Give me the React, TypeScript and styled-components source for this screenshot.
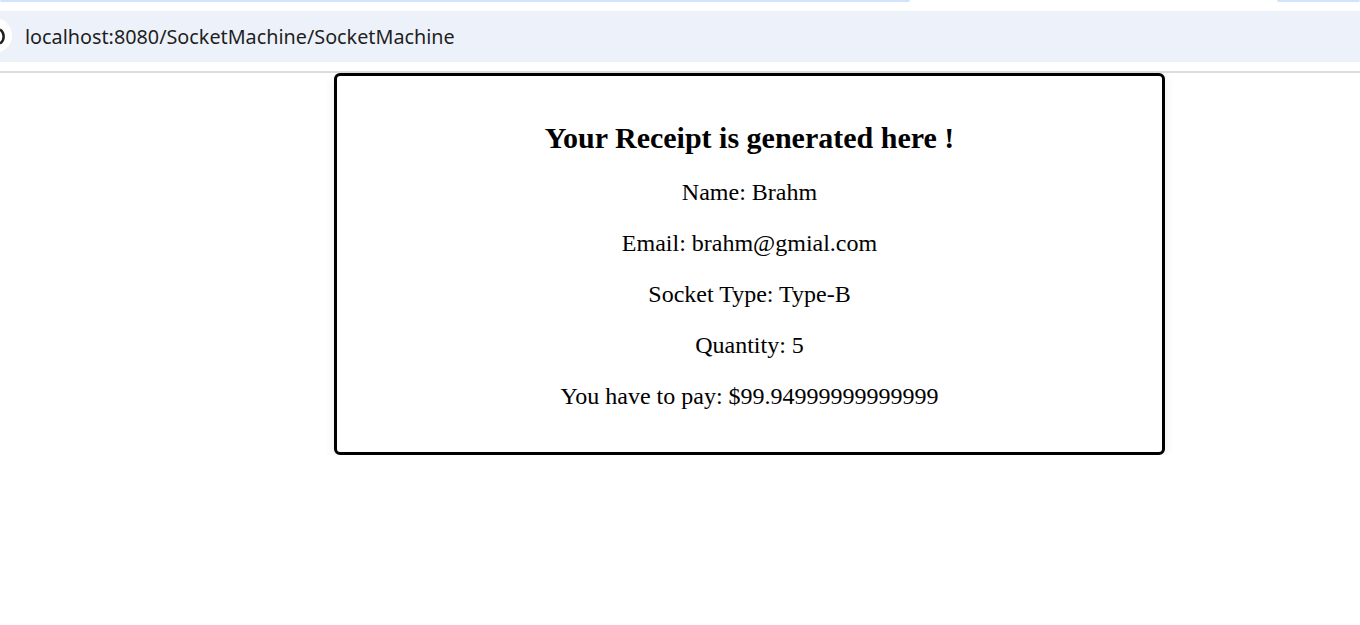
import React from "react";
import styled, { createGlobalStyle } from "styled-components";

const GlobalStyle = createGlobalStyle`
  html, body {
    margin: 0;
    padding: 0;
    background: #ffffff;
  }
  body {
    font-family: "Liberation Serif", "Times New Roman", serif;
    overflow: hidden;
  }
`;

const Chrome = styled.header`
  position: relative;
  height: 73px;
  background: #ffffff;
  box-sizing: border-box;
  border-bottom: 2px solid #dadce0;
  display: flex;
  flex-direction: column;
`;

const TabEdge = styled.div`
  height: 2px;
  display: flex;
`;

const TabEdgePart = styled.div<{ $grow?: boolean; $w?: number; $blue?: boolean }>`
  height: 2px;
  ${(p) => (p.$grow ? "flex: 1;" : `width: ${p.$w}px;`)}
  background: ${(p) => (p.$blue ? "#d3e3fd" : "#ffffff")};
  border-radius: 0 0 4px 4px;
`;

const AddressBar = styled.div`
  margin-top: 9px;
  height: 51px;
  background: #edf2fa;
  display: flex;
  align-items: center;
  position: relative;
  overflow: hidden;
`;

const SiteIcon = styled.div`
  position: absolute;
  left: -23px;
  top: 7px;
  width: 35px;
  height: 35px;
  border-radius: 50%;
  background: #ffffff;
`;

const UrlText = styled.span`
  margin-left: 25px;
  font-family: "Noto Sans", "Open Sans", sans-serif;
  font-size: 19.8px;
  color: #1f1f1f;
  letter-spacing: 0;
`;

const Page = styled.main`
  display: flex;
  padding-left: 334px;
`;

const Card = styled.section`
  width: 831px;
  box-sizing: border-box;
  border: 3px solid #000000;
  border-radius: 6px;
  padding: 20px 20px 18px;
  text-align: center;
  box-shadow: 0 4px 12px rgba(0, 0, 0, 0.08);
  background: #ffffff;
`;

const Title = styled.h2`
  font-size: 30px;
  font-weight: bold;
  margin: 25px 0 23px;
  color: #000;
`;

const Line = styled.p`
  font-size: 24px;
  margin: 24px 0;
  color: #000;
`;

export default function App() {
  const rows = [
    "Name: Brahm",
    "Email: brahm@gmial.com",
    "Socket Type: Type-B",
    "Quantity: 5",
    "You have to pay: $99.94999999999999",
  ];
  return (
    <>
      <GlobalStyle />
      <Chrome>
        <TabEdge>
          <TabEdgePart $w={910} $blue />
          <TabEdgePart $w={367} />
          <TabEdgePart $grow $blue />
        </TabEdge>
        <AddressBar>
          <SiteIcon>
            <svg width="35" height="35" viewBox="0 0 35 35">
              <path
                d="M23 11.5 A8.5 8.5 0 0 1 23 25.5"
                fill="none"
                stroke="#1f1f1f"
                strokeWidth="2.5"
              />
            </svg>
          </SiteIcon>
          <UrlText>localhost:8080/SocketMachine/SocketMachine</UrlText>
        </AddressBar>
      </Chrome>
      <Page>
        <Card>
          <Title>Your Receipt is generated here !</Title>
          {rows.map((r) => (
            <Line key={r}>{r}</Line>
          ))}
        </Card>
      </Page>
    </>
  );
}
